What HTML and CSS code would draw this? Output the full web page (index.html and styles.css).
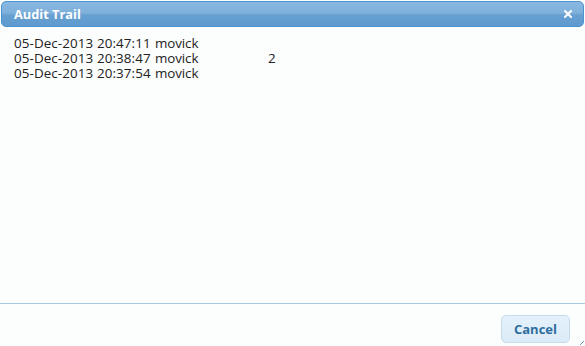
FILE: index.html
```html
<!DOCTYPE html>
<html>
<head>
<meta charset="utf-8">
<link rel="stylesheet" href="styles.css">
</head>
<body>
<div class="dialog">
  <div class="titlebar">
    <span class="title">Audit Trail</span>
    <span class="close" aria-label="close">
      <svg width="8" height="8" viewBox="0 0 8 8"><path d="M1 1 L7 7 M7 1 L1 7" stroke="#fff" stroke-width="2" stroke-linecap="square"/></svg>
    </span>
  </div>
  <div class="content">
    <div class="rows">
      <span class="c-date">05-Dec-2013 20:47:11</span><span class="c-user">movick</span><span class="c-val"></span>
      <span class="c-date">05-Dec-2013 20:38:47</span><span class="c-user">movick</span><span class="c-val">2</span>
      <span class="c-date">05-Dec-2013 20:37:54</span><span class="c-user">movick</span><span class="c-val"></span>
    </div>
  </div>
  <div class="buttonpane">
    <button class="btn">Cancel</button>
  </div>
  <div class="grip"></div>
</div>
</body>
</html>
```
FILE: styles.css
```css
html, body {
  margin: 0;
  padding: 0;
  background: #fcfdfd;
}
.dialog {
  position: relative;
  width: 585px;
  height: 346px;
  display: flex;
  flex-direction: column;
  background: #fcfdfd;
  font-family: "Open Sans", "Noto Sans", sans-serif;
  box-sizing: border-box;
  padding: 1px 1px 0 1px;
}
.titlebar {
  height: 26px;
  box-sizing: border-box;
  border: 1px solid #4a94cf;
  border-radius: 5px;
  background: linear-gradient(to bottom, #88b8e0 0%, #7fb1dc 45%, #679fd1 55%, #5f9bcf 100%);
  display: flex;
  align-items: center;
  justify-content: space-between;
  padding: 0 11px 0 12px;
  color: #fff;
}
.title {
  font-weight: bold;
  font-size: 12.8px;
}
.close {
  display: flex;
  align-items: center;
}
.content {
  flex: 1;
  padding: 9px 12px 0 13px;
}
.rows {
  display: grid;
  grid-template-columns: 141px 113px auto;
  justify-content: start;
  font-size: 13.4px;
  line-height: 15px;
  color: #222;
  letter-spacing: -0.1px;
}
.c-date { letter-spacing: 0.1px; }
.c-date, .c-user, .c-val { white-space: nowrap; }
.buttonpane {
  border-top: 1px solid #a6c9e2;
  height: 42px;
  display: flex;
  justify-content: flex-end;
  align-items: center;
  padding: 0 15px 0 0;
  margin: 0 -1px;
}
.btn {
  width: 69px;
  height: 28px;
  margin-top: 7px;
  border: 1px solid #c5dbec;
  border-radius: 5px;
  background: linear-gradient(to bottom, #e4f1fb 0%, #dcebf8 100%);
  color: #2e6e9e;
  font-family: "Open Sans", "Noto Sans", sans-serif;
  font-weight: bold;
  font-size: 13px;
  padding: 0;
}
.grip {
  position: absolute;
  right: 1px;
  bottom: 1px;
  width: 4px;
  height: 4px;
  background: linear-gradient(135deg, transparent 45%, #6d9cc2 45%, #6d9cc2 60%, transparent 60%);
}
```
